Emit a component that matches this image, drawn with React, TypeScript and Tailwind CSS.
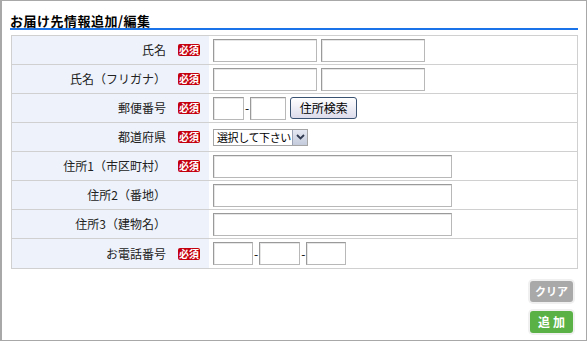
import React from "react";

const Badge = () => (
  <span className="inline-flex items-center justify-center w-[22px] h-[12px] bg-[#c4000f] text-white text-[10px] leading-none rounded-[2px] font-bold">
    必須
  </span>
);

const Input = ({ w }: { w: string }) => (
  <div className={`${w} h-[23px] bg-white border border-[#b8b8b8] border-t-[#9a9a9a] border-l-[#9a9a9a] shadow-[inset_1px_1px_0_#e6e6e6]`} />
);

const Dash = () => <span className="text-[12px] leading-none mx-[1px] text-black">-</span>;

const Row = ({
  label,
  req,
  children,
  last,
}: {
  label: string;
  req?: boolean;
  children: React.ReactNode;
  last?: boolean;
}) => (
  <div className={`flex h-[29px] ${last ? "" : "border-b border-[#d0d0d0]"}`}>
    <div className="w-[197px] bg-[#eef3fb] flex items-center justify-end pr-[9px] gap-[12px]">
      <span className="text-[12px] text-[#222] whitespace-nowrap">{label}</span>
      <span className="w-[22px] flex">{req ? <Badge /> : null}</span>
    </div>
    <div className="flex-1 flex items-center pl-[4px] bg-white">{children}</div>
  </div>
);

export default function App() {
  return (
    <div
      className="w-[587px] h-[341px] bg-white border border-[#a8a8a8] border-l-2 relative"
      style={{ fontFamily: '"Noto Sans CJK JP", "Liberation Sans", sans-serif' }}
    >
      <div className="px-[8px]">
        <div className="h-[27px] flex items-end pb-[1px]">
          <h1 className="text-[13px] font-bold leading-none text-black tracking-[0.5px]">お届け先情報追加/編集</h1>
        </div>
        <div className="h-[2px] bg-[#1a73e8] w-[568px]" />
        <div className="mt-[5px] ml-[1px] w-[567px] border border-[#d0d0d0]">
          <Row label="氏名" req>
            <div className="flex gap-[4px]">
              <Input w="w-[104px]" />
              <Input w="w-[104px]" />
            </div>
          </Row>
          <Row label="氏名（フリガナ）" req>
            <div className="flex gap-[4px]">
              <Input w="w-[104px]" />
              <Input w="w-[104px]" />
            </div>
          </Row>
          <Row label="郵便番号" req>
            <div className="flex items-center">
              <Input w="w-[31px]" />
              <Dash />
              <Input w="w-[36px]" />
              <button className="ml-[4px] h-[22px] w-[67px] rounded-[3px] border border-[#3a5272] bg-gradient-to-b from-[#ffffff] to-[#dcdcec] text-[12px] text-black leading-none">
                住所検索
              </button>
            </div>
          </Row>
          <Row label="都道府県" req>
            <div className="flex items-center h-[17px] w-[95px] border border-[#a5a5a5] bg-white">
              <span className="flex-1 text-[11px] tracking-[-0.4px] leading-none pl-[3px] text-black whitespace-nowrap">選択して下さい</span>
              <span className="w-[15px] h-[15px] shrink-0 bg-gradient-to-b from-[#e4e8f2] to-[#c4cbdb] border-l border-[#9aa3b5] flex items-center justify-center">
                <svg width="9" height="6" viewBox="0 0 9 6">
                  <path d="M1 1 L4.5 4.5 L8 1" stroke="#303a50" strokeWidth="1.8" fill="none" />
                </svg>
              </span>
            </div>
          </Row>
          <Row label="住所1（市区町村）" req>
            <Input w="w-[239px]" />
          </Row>
          <Row label="住所2（番地）">
            <Input w="w-[239px]" />
          </Row>
          <Row label="住所3（建物名）">
            <Input w="w-[239px]" />
          </Row>
          <Row label="お電話番号" req last>
            <div className="flex items-center">
              <Input w="w-[40px]" />
              <Dash />
              <Input w="w-[41px]" />
              <Dash />
              <Input w="w-[40px]" />
            </div>
          </Row>
        </div>
        <div className="flex flex-col items-end gap-[9px] mt-[12px] pr-[5px]">
          <button className="w-[43px] h-[21px] rounded-[3px] bg-[#a9a9a9] text-white text-[11px] font-bold leading-none shadow-[0_0_0_2px_#f0f0f0]">
            クリア
          </button>
          <button className="w-[43px] h-[22px] rounded-[3px] bg-[#5ab246] text-white text-[12px] font-bold leading-none tracking-[3px] pl-[3px] shadow-[0_0_0_2px_#f0f0f0]">
            追加
          </button>
        </div>
      </div>
    </div>
  );
}
